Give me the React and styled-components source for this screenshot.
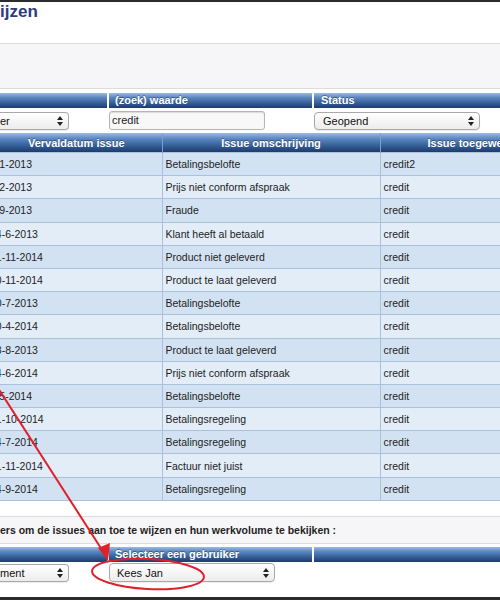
import React from "react";
import styled, { createGlobalStyle } from "styled-components";

const GlobalStyle = createGlobalStyle`
  html, body {
    margin: 0;
    padding: 0;
    background: #fff;
    overflow: hidden;
  }
  body {
    font-family: "Liberation Sans", Arial, sans-serif;
    color: #222;
  }
`;

const Page = styled.div`
  position: relative;
  width: 500px;
  height: 600px;
  box-sizing: border-box;
  border-top: 2px solid #2b2b2b;
  border-bottom: 3px solid #2b2b2b;
  overflow: hidden;
  display: flex;
  flex-direction: column;
`;

const TitleArea = styled.div`
  height: 41px;
  border-bottom: 1px solid #dcdcdc;
`;

const Title = styled.h1`
  margin: 0;
  font-size: 17px;
  line-height: 20px;
  font-weight: bold;
  color: #2d3a86;
`;

const Band = styled.div`
  height: ${(p) => p.$height}px;
  background: #f6f6f8;
  border-bottom: 1px solid #dcdcdc;
  border-top: ${(p) => (p.$topLine ? "1px solid #dcdcdc" : "none")};
  display: flex;
  align-items: center;
  font-size: 10.5px;
  font-weight: bold;
  color: #1e1e1e;
  white-space: nowrap;
`;

const Bar = styled.div`
  display: grid;
  grid-template-columns: 107px 203px 1fr;
  column-gap: 2px;
  margin-top: ${(p) => p.$top}px;
  height: 15px;
`;

const BarCell = styled.div`
  background: linear-gradient(#9dbbe0 0%, #5c87c0 30%, #3a669f 60%, #1e3a6c 100%);
  color: #fff;
  font-size: 11px;
  font-weight: bold;
  line-height: 15px;
  padding-left: ${(p) => p.$pad || 6}px;
  text-shadow: 0 -1px 0 rgba(0, 0, 0, 0.35);
  white-space: nowrap;
  overflow: hidden;
`;

const FieldRow = styled.div`
  display: grid;
  grid-template-columns: 109px 205px 1fr;
  align-items: center;
  height: ${(p) => p.$height}px;
`;

const SelectBox = styled.div`
  box-sizing: border-box;
  width: ${(p) => p.$width}px;
  height: ${(p) => p.$h || 18}px;
  border: 1px solid #a9a9a9;
  border-radius: 4px;
  background: linear-gradient(#ffffff, #ececec);
  display: flex;
  align-items: center;
  justify-content: space-between;
  padding: 0 5px 0 ${(p) => p.$pad}px;
  font-size: 11px;
  color: #111;
  box-shadow: 0 1px 1px rgba(0, 0, 0, 0.08);
`;

const LeftSelect = styled(SelectBox)`
  border-left: none;
  border-radius: 0 4px 4px 0;
`;

const TextInput = styled.div`
  box-sizing: border-box;
  width: 156px;
  height: 19px;
  border: 1px solid #b4b4b4;
  border-radius: 3px;
  background: #f8f8f8;
  box-shadow: inset 0 1px 1px rgba(0, 0, 0, 0.12);
  font-size: 11px;
  line-height: 17px;
  padding-left: 2px;
`;

const Arrows = () => (
  <svg width="6" height="10" viewBox="0 0 6 10">
    <path d="M3 0 L6 4 L0 4 Z M3 10 L6 6 L0 6 Z" fill="#222" />
  </svg>
);

const Table = styled.table`
  border-collapse: collapse;
  table-layout: fixed;
  width: 590px;
  font-size: 10.5px;
`;

const HeadCell = styled.th`
  height: 19px;
  padding: 0;
  background: linear-gradient(#9dbbe0 0%, #5c87c0 30%, #3a669f 60%, #1e3a6c 100%);
  color: #fff;
  font-size: 11px;
  font-weight: bold;
  text-align: center;
  text-shadow: 0 -1px 0 rgba(0, 0, 0, 0.35);
  border-left: 1px solid #7d9fcc;
  white-space: nowrap;
  overflow: hidden;
  &:first-child {
    border-left: none;
    padding-right: 9px;
  }
`;

const Row = styled.tr`
  background: ${(p) => (p.$odd ? "#d3e2f2" : "#e3edf8")};
`;

const Cell = styled.td`
  height: 22.2px;
  padding: 0 0 0 3px;
  border: 1px solid #a9c1dc;
  color: #222;
  white-space: nowrap;
  overflow: hidden;
  &:first-child {
    border-left: none;
    padding-left: 0;
    text-indent: -10px;
    overflow: visible;
  }
`;

const Gap = styled.div`
  height: ${(p) => p.$h}px;
  flex-shrink: 0;
`;

const Overlay = styled.svg`
  position: absolute;
  top: 0;
  left: 0;
  pointer-events: none;
`;

const rows = [
  ["1-1-2013", "Betalingsbelofte", "credit2"],
  ["1-2-2013", "Prijs niet conform afspraak", "credit"],
  ["1-9-2013", "Fraude", "credit"],
  ["24-6-2013", "Klant heeft al betaald", "credit"],
  ["21-11-2014", "Product niet geleverd", "credit"],
  ["20-11-2014", "Product te laat geleverd", "credit"],
  ["10-7-2013", "Betalingsbelofte", "credit"],
  ["30-4-2014", "Betalingsbelofte", "credit"],
  ["28-8-2013", "Product te laat geleverd", "credit"],
  ["24-6-2014", "Prijs niet conform afspraak", "credit"],
  ["1-5-2014", "Betalingsbelofte", "credit"],
  ["21-10-2014", "Betalingsregeling", "credit"],
  ["24-7-2014", "Betalingsregeling", "credit"],
  ["21-11-2014", "Factuur niet juist", "credit"],
  ["24-9-2014", "Betalingsregeling", "credit"],
];

export default function App() {
  return (
    <>
      <GlobalStyle />
      <Page>
        <TitleArea>
          <Title>ijzen</Title>
        </TitleArea>
        <Band $height={44} />

        <Bar $top={4}>
          <BarCell />
          <BarCell>(zoek) waarde</BarCell>
          <BarCell $pad={7}>Status</BarCell>
        </Bar>
        <FieldRow $height={25}>
          <LeftSelect $width={69} $pad={0}>
            <span>er</span>
            <Arrows />
          </LeftSelect>
          <TextInput>credit</TextInput>
          <SelectBox $width={166} $pad={8}>
            <span>Geopend</span>
            <Arrows />
          </SelectBox>
        </FieldRow>

        <Table>
          <colgroup>
            <col style={{ width: 162 }} />
            <col style={{ width: 218 }} />
            <col style={{ width: 210 }} />
          </colgroup>
          <thead>
            <tr>
              <HeadCell>Vervaldatum issue</HeadCell>
              <HeadCell>Issue omschrijving</HeadCell>
              <HeadCell>Issue toegewezen aan</HeadCell>
            </tr>
          </thead>
          <tbody>
            {rows.map((r, i) => (
              <Row key={i} $odd={i % 2 === 0}>
                <Cell>{r[0]}</Cell>
                <Cell>{r[1]}</Cell>
                <Cell>{r[2]}</Cell>
              </Row>
            ))}
          </tbody>
        </Table>

        <Gap $h={15} />
        <Band $height={26} $topLine>
          ers om de issues aan toe te wijzen en hun werkvolume te bekijken :
        </Band>

        <Bar $top={3}>
          <BarCell />
          <BarCell>Selecteer een gebruiker</BarCell>
          <BarCell />
        </Bar>
        <FieldRow $height={22}>
          <LeftSelect $width={69} $pad={0}>
            <span>ment</span>
            <Arrows />
          </LeftSelect>
          <SelectBox $width={166} $pad={7} $h={19}>
            <span>Kees Jan</span>
            <Arrows />
          </SelectBox>
        </FieldRow>

        <Overlay width="500" height="600" viewBox="0 0 500 600">
          <line
            x1="-2"
            y1="386"
            x2="104"
            y2="551"
            stroke="#e0202c"
            strokeWidth="2"
          />
          <path d="M108 559 L98 546 L110 541 Z" fill="#e0202c" />
          <ellipse
            cx="148"
            cy="572"
            rx="56"
            ry="15"
            fill="none"
            stroke="#e0202c"
            strokeWidth="2"
            transform="rotate(3 148 572)"
          />
        </Overlay>
      </Page>
    </>
  );
}
